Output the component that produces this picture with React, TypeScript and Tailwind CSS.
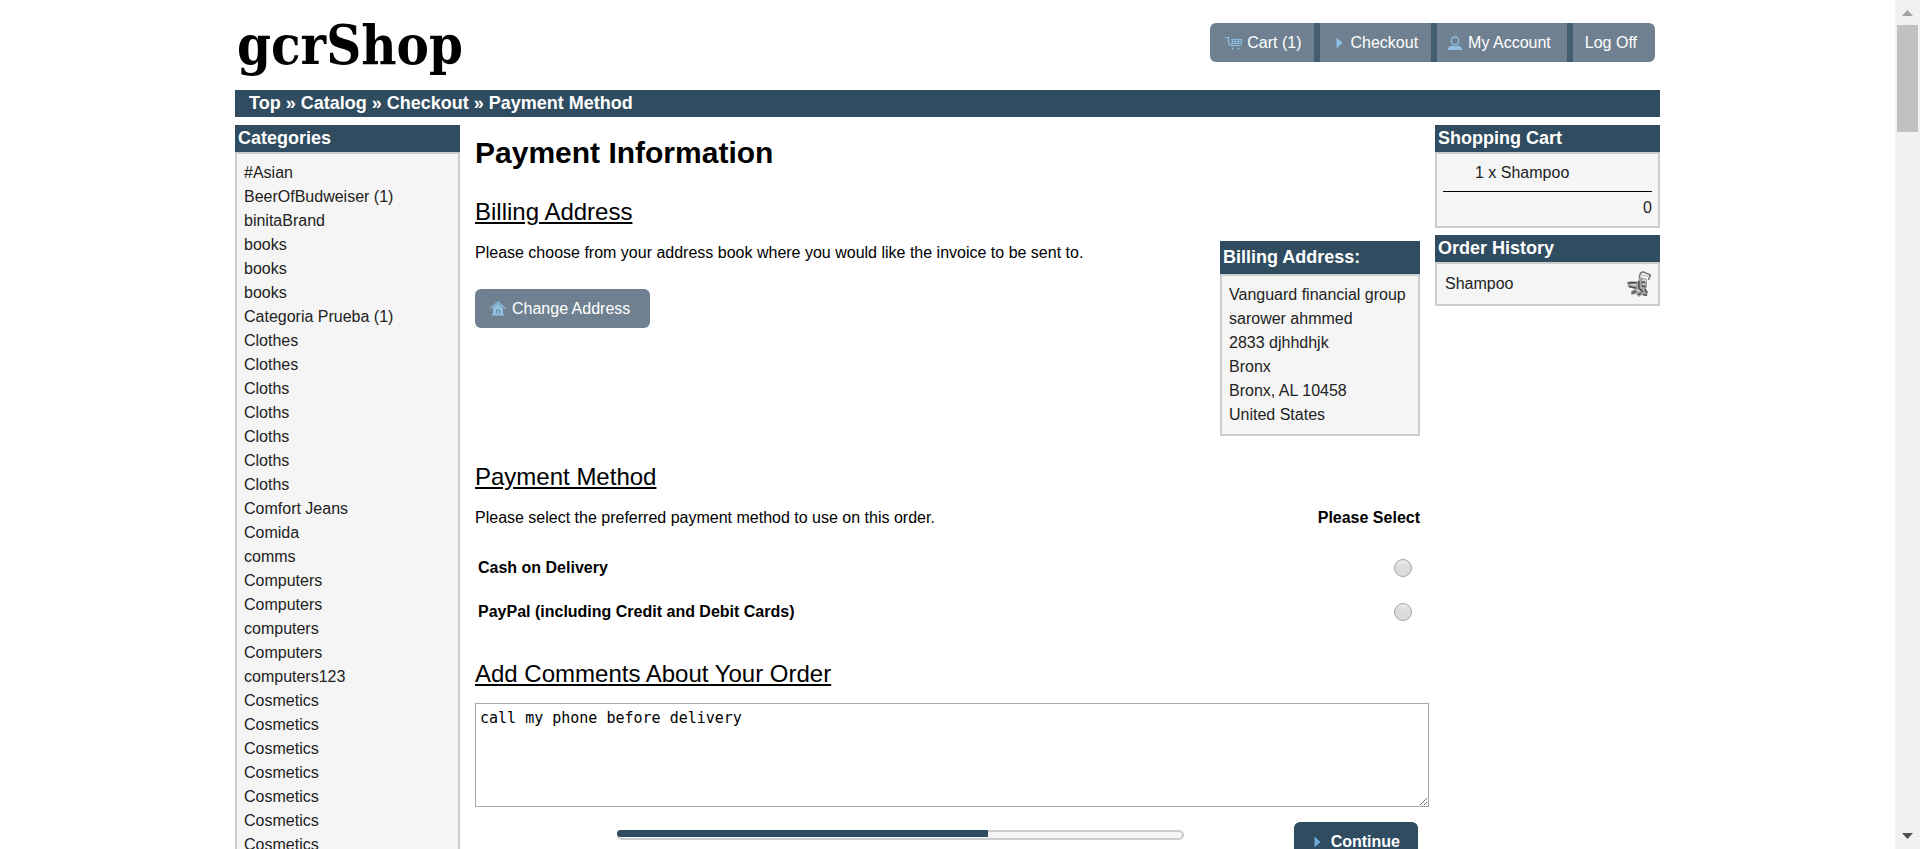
import React from "react";

const categories = [
  "#Asian", "BeerOfBudweiser (1)", "binitaBrand", "books", "books", "books",
  "Categoria Prueba (1)", "Clothes", "Clothes", "Cloths", "Cloths", "Cloths",
  "Cloths", "Cloths", "Comfort Jeans", "Comida", "comms", "Computers",
  "Computers", "computers", "Computers", "computers123", "Cosmetics",
  "Cosmetics", "Cosmetics", "Cosmetics", "Cosmetics", "Cosmetics", "Cosmetics",
];

const address = [
  "Vanguard financial group", "sarower ahmmed", "2833 djhhdhjk", "Bronx",
  "Bronx, AL 10458", "United States",
];

const payments = [
  { id: "cod", label: "Cash on Delivery" },
  { id: "paypal", label: "PayPal (including Credit and Debit Cards)" },
];

function CartIcon() {
  return (
    <svg width="18" height="14" viewBox="0 0 18 14" fill="none" stroke="#8fc0e4" aria-hidden="true">
      <path d="M0 1.5H3.5V6L5 9.5H16" strokeWidth="1.2" />
      <path d="M6 3.5H17M6 5.5H17M6 7.5H16M7.5 3V8M10.5 3V8M13.5 3V8M16.5 3V8" strokeWidth="0.9" />
      <circle cx="7.5" cy="12.5" r="1" fill="#8fc0e4" stroke="none" />
      <circle cx="13.5" cy="12.5" r="1" fill="#8fc0e4" stroke="none" />
    </svg>
  );
}

function ArrowIcon({ color }: { color: string }) {
  return (
    <svg width="7" height="12" viewBox="0 0 7 12" aria-hidden="true">
      <path d="M0.5 0.5L6.5 6L0.5 11.5Z" fill={color} />
    </svg>
  );
}

function PersonIcon() {
  return (
    <svg width="16" height="14" viewBox="0 0 16 14" aria-hidden="true">
      <circle cx="8" cy="4.8" r="3.8" fill="none" stroke="#8fc0e4" strokeWidth="1.3" />
      <path d="M0.5 14C1 11 3 10 5.5 9.5C7 10.3 9 10.3 10.5 9.5C13 10 15 11 15.5 14Z" fill="#8fc0e4" />
    </svg>
  );
}

function HomeIcon() {
  return (
    <svg width="16" height="15" viewBox="0 0 16 15" aria-hidden="true">
      <path d="M0.5 7.5L8 0.8L15.5 7.5" fill="none" stroke="#8fc0e4" strokeWidth="1.1" />
      <path d="M8 2.2L13 6.8V13H14V14.5H2V13H3V6.8Z" fill="#8fc0e4" />
      <path d="M6.5 13V9H9.5V13" fill="none" stroke="#6f8190" strokeWidth="0.9" />
    </svg>
  );
}

function ReorderIcon() {
  return (
    <svg width="24" height="26" viewBox="0 0 24 26" aria-hidden="true">
      <path d="M0 11L4 10L10 11L13 6L20 8L20 15L19 18L21 21L20 25L15 24L12 26L9 23L4 24L4 20L8 18L1 16Z" fill="#a3a3a3" />
      <path d="M12 7L13.5 2L16 0.8L23.5 4L21.5 9" fill="none" stroke="#707070" strokeWidth="1.4" />
      <path d="M14 3.5L22 6" fill="none" stroke="#b5b5b5" strokeWidth="1.2" />
      <path d="M1 12L10 11.5M2 15.5L9 17M12 10V17L16 21M14.5 12L18 11M15 14.5L18.5 16M18 18L20 22M5 22L9 20M11 24L14 22M16 23.5L20 24.5" fill="none" stroke="#4d4d4d" strokeWidth="1.5" />
      <path d="M4 13.8H9M15.5 13L17.5 13.5M10 19L13 20.5M16 9L19 9.5" fill="none" stroke="#e2e2e2" strokeWidth="1.3" />
    </svg>
  );
}

function InfoBox({ title, tall, children }: { title: string; tall?: boolean; children: React.ReactNode }) {
  return (
    <section>
      <h2 className={`${tall ? "leading-[33px]" : "leading-[27px]"} bg-[#2f4c60] px-[3px] text-lg font-bold text-white`}>
        {title}
      </h2>
      <div className="border-2 border-[#cccccc] bg-[#f5f5f5] text-[#222222]">{children}</div>
    </section>
  );
}

function Heading({ children }: { children: React.ReactNode }) {
  return <h2 className="text-2xl leading-7 underline">{children}</h2>;
}

const navLink = "flex h-full items-center text-white";

export default function App() {
  return (
    <div className="flex h-screen overflow-hidden bg-white font-['Liberation_Sans',Arial,sans-serif] text-base leading-6 text-black">
      <div className="min-w-0 flex-1 overflow-y-auto [scrollbar-width:none]">
        <div className="mx-auto w-full max-w-[1425px]">
          <header className="flex h-[90px] items-start justify-between">
            <a href="#home" className="pl-[2px] font-['DejaVu_Serif_Condensed','DejaVu_Serif',serif] text-[54px] leading-[90px] font-bold">
              gcrShop
            </a>
            <nav className="mt-[23px] mr-[5px] flex h-[39px] divide-x-6 divide-[#455d70] overflow-hidden rounded-md bg-[#6f8190]">
              <a href="#cart" className={`${navLink} gap-1 pr-3 pl-[15px]`}><CartIcon />Cart (1)</a>
              <a href="#checkout" className={`${navLink} gap-2 pr-[13px] pl-4`}><ArrowIcon color="#8fc0e4" />Checkout</a>
              <a href="#account" className={`${navLink} gap-[5px] pr-4 pl-[10px]`}><PersonIcon />My Account</a>
              <a href="#logoff" className={`${navLink} pr-[18px] pl-3`}>Log Off</a>
            </nav>
          </header>

          <nav className="bg-[#2f4c60] px-[14px] text-lg leading-[27px] font-bold text-white">
            <a href="#top">Top</a> » <a href="#catalog">Catalog</a> » <a href="#checkout">Checkout</a> »{" "}
            <a href="#payment">Payment Method</a>
          </nav>

          <div className="mt-2 flex items-start gap-[15px]">
            <aside className="w-[225px] shrink-0">
              <InfoBox title="Categories">
                <ul className="p-[7px]">
                  {categories.map((name, i) => (
                    <li key={i}><a href="#category">{name}</a></li>
                  ))}
                </ul>
              </InfoBox>
            </aside>

            <main className="min-w-0 flex-1 pt-[10px]">
              <h1 className="text-3xl leading-9 font-bold">Payment Information</h1>

              <div className="mt-[27px]">
                <Heading>Billing Address</Heading>
                <div className="mt-[15px] flex items-start justify-between">
                  <div>
                    <p>Please choose from your address book where you would like the invoice to be sent to.</p>
                    <button className="mt-6 flex h-[39px] items-center gap-[6px] rounded-md bg-[#6f8190] pr-5 pl-[15px] text-white">
                      <HomeIcon />Change Address
                    </button>
                  </div>
                  <div className="min-w-[200px]">
                    <InfoBox title="Billing Address:" tall>
                      <address className="p-[7px] whitespace-nowrap not-italic">
                        {address.map((line) => <div key={line}>{line}</div>)}
                      </address>
                    </InfoBox>
                  </div>
                </div>
              </div>

              <div className="mt-[27px]">
                <Heading>Payment Method</Heading>
                <div className="mt-[15px] flex justify-between">
                  <p>Please select the preferred payment method to use on this order.</p>
                  <strong>Please Select</strong>
                </div>
                <div className="mt-4">
                  {payments.map((p) => (
                    <div key={p.id} className="flex h-11 items-center justify-between pr-2 pl-[3px]">
                      <label htmlFor={p.id} className="font-bold">{p.label}</label>
                      <input
                        id={p.id}
                        type="radio"
                        name="payment"
                        className="size-[18px] appearance-none rounded-full border border-[#a3a3a3] bg-linear-to-b from-[#ededed] to-[#dcdcdc] to-40%"
                      />
                    </div>
                  ))}
                </div>
              </div>

              <div className="mt-[26px]">
                <Heading><label htmlFor="comments">Add Comments About Your Order</label></Heading>
                <div className="mt-[15px] -mr-[9px]">
                  <textarea
                    id="comments"
                    defaultValue="call my phone before delivery"
                    className="block h-[104px] w-full border border-[#a9a9a9] px-1 py-[5px] font-['DejaVu_Sans_Mono',monospace] text-[15px] leading-[19px]"
                  />
                </div>
              </div>

              <div className="mt-[15px] flex items-start">
                <div className="mt-2 ml-[15%] h-[10px] w-3/5 rounded-md border-2 border-[#cccccc] bg-[#f5f5f5]">
                  <div className="-mt-[2px] -ml-[2px] h-[7px] w-[66%] rounded-l-sm bg-[#2f4c60]" />
                </div>
                <button className="mr-[2px] ml-auto flex h-[39px] items-center gap-[10px] rounded-md bg-[#2f4c60] pr-[18px] pl-5 font-bold text-white">
                  <ArrowIcon color="#6aa9d8" />Continue
                </button>
              </div>
            </main>

            <aside className="flex w-[225px] shrink-0 flex-col gap-[7px]">
              <InfoBox title="Shopping Cart">
                <div className="px-[6px] pt-[7px] pb-[6px]">
                  <div className="border-b border-black pb-[6px] pl-8"><a href="#shampoo">1 x Shampoo</a></div>
                  <div className="pt-1 text-right">0</div>
                </div>
              </InfoBox>
              <InfoBox title="Order History">
                <div className="flex h-10 items-center justify-between pr-[7px] pl-2">
                  <a href="#shampoo">Shampoo</a>
                  <a href="#reorder" aria-label="Reorder Shampoo"><ReorderIcon /></a>
                </div>
              </InfoBox>
            </aside>
          </div>
        </div>
      </div>

      <div className="flex w-[25px] shrink-0 flex-col items-center bg-[#f1f1f1]" aria-hidden="true">
        <svg className="mt-[10px]" width="11" height="6" viewBox="0 0 11 6"><path d="M0 6L5.5 0L11 6Z" fill="#a3a3a3" /></svg>
        <div className="mt-[9px] h-[107px] w-[21px] bg-[#c1c1c1]" />
        <svg className="mt-auto mb-[10px]" width="11" height="6" viewBox="0 0 11 6"><path d="M0 0H11L5.5 6Z" fill="#505050" /></svg>
      </div>
    </div>
  );
}
